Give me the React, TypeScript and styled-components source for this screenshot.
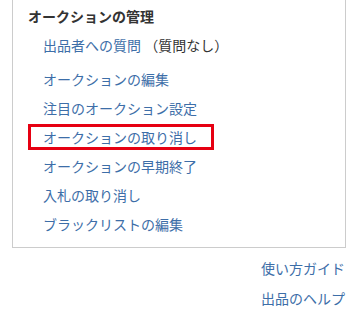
import styled, { createGlobalStyle } from "styled-components";

const GlobalStyle = createGlobalStyle`
  body {
    margin: 0;
    background: #fff;
    font-family: "Noto Sans CJK JP", "Noto Sans", sans-serif;
    font-size: 14px;
    color: #333;
  }
`;

const Panel = styled.section`
  margin-left: 12px;
  width: 334px;
  box-sizing: border-box;
  border: 1px solid #cccccc;
  border-top: none;
  padding: 6px 0 8px 15px;
`;

const Title = styled.h2`
  margin: 0;
  font-size: 14px;
  font-weight: bold;
  line-height: 20px;
  color: #333;
`;

const List = styled.ul`
  list-style: none;
  margin: 0;
  padding: 0 0 0 15px;
`;

const Item = styled.li<{ $gapAfter?: boolean }>`
  height: 29px;
  line-height: 29px;
  margin-bottom: ${(p) => (p.$gapAfter ? "5px" : "0")};
  &:first-child {
    margin-top: 5px;
  }
`;

const Link = styled.a<{ $marked?: boolean }>`
  position: relative;
  color: #3d6ea8;
  text-decoration: none;
  cursor: pointer;

  ${(p) =>
    p.$marked &&
    `
    &::after {
      content: "";
      position: absolute;
      left: -15px;
      right: -17px;
      top: 50%;
      height: 26px;
      transform: translateY(-50%);
      box-sizing: border-box;
      border: 3px solid #e60012;
    }
  `}
`;

const Note = styled.span`
  color: #333;
`;

const Footer = styled.div`
  text-align: right;
  padding: 5px 11px 0 0;
`;

const FooterLink = styled.a`
  display: block;
  line-height: 30px;
  color: #3d6ea8;
  text-decoration: none;
`;

const items = [
  { label: "オークションの編集" },
  { label: "注目のオークション設定" },
  { label: "オークションの取り消し", marked: true },
  { label: "オークションの早期終了" },
  { label: "入札の取り消し" },
  { label: "ブラックリストの編集" },
];

export default function App() {
  return (
    <>
      <GlobalStyle />
      <Panel>
        <Title>オークションの管理</Title>
        <List>
          <Item $gapAfter>
            <Link>出品者への質問</Link> <Note>（質問なし）</Note>
          </Item>
          {items.map((it) => (
            <Item key={it.label}>
              <Link $marked={it.marked}>{it.label}</Link>
            </Item>
          ))}
        </List>
      </Panel>
      <Footer>
        <FooterLink>使い方ガイド</FooterLink>
        <FooterLink>出品のヘルプ</FooterLink>
      </Footer>
    </>
  );
}
